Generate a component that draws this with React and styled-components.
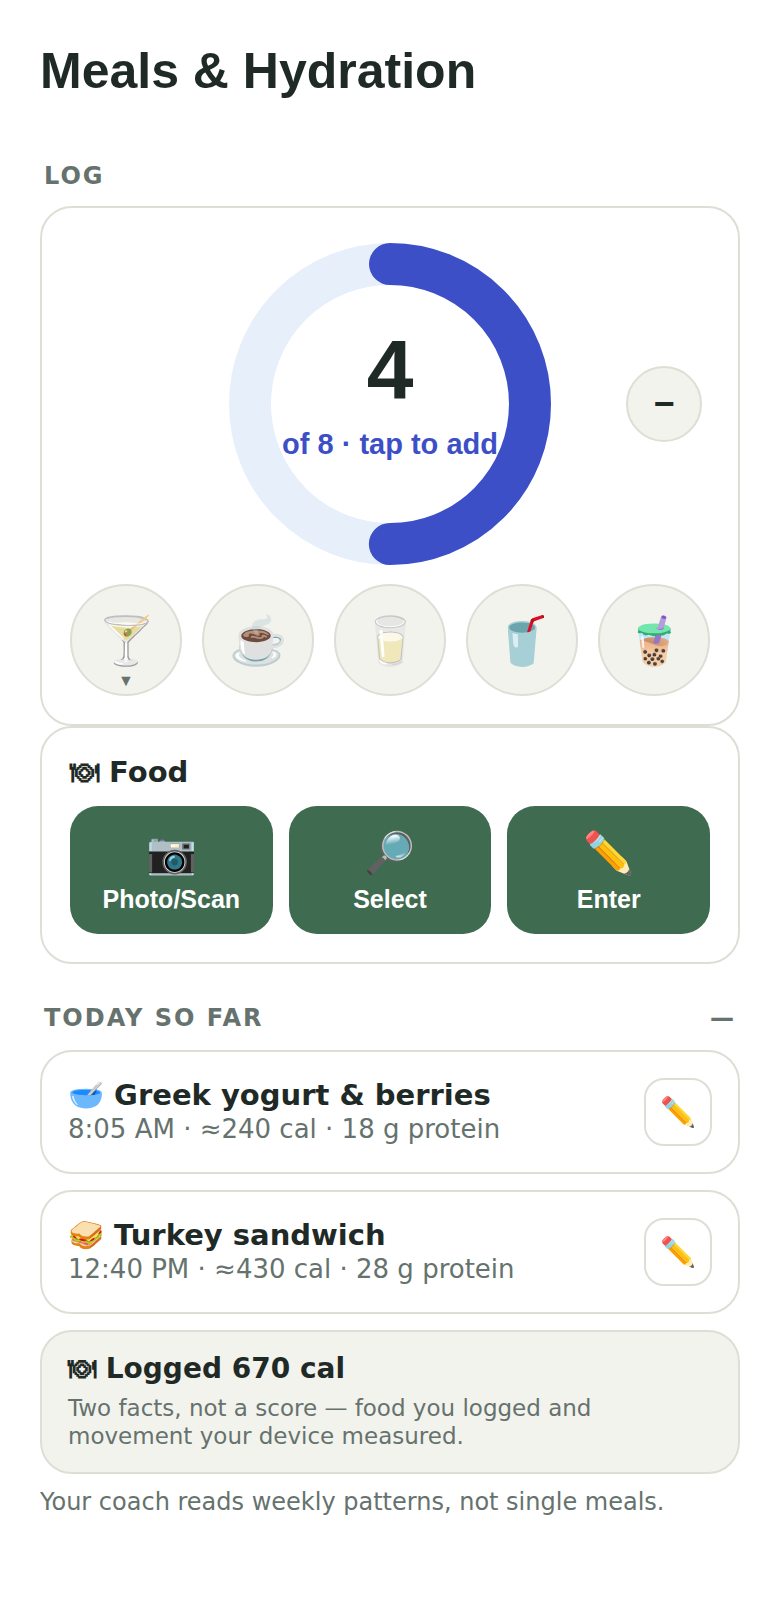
import React from 'react'
import styled, { createGlobalStyle } from 'styled-components'

const drinks = [
    { icon: '🍸', label: 'Cocktail', more: true },
    { icon: '☕', label: 'Coffee' },
    { icon: '🥛', label: 'Milk' },
    { icon: '🥤', label: 'Soft drink' },
    { icon: '🧋', label: 'Bubble tea' },
]

const foodActions = [
    { icon: '📷', label: 'Photo/Scan' },
    { icon: '🔎', label: 'Select' },
    { icon: '✏️', label: 'Enter' },
]

const meals = [
    { icon: '🥣', name: 'Greek yogurt & berries', detail: '8:05 AM · ≈240 cal · 18 g protein' },
    { icon: '🥪', name: 'Turkey sandwich', detail: '12:40 PM · ≈430 cal · 28 g protein' },
]

const RADIUS = 140
const LENGTH = 2 * Math.PI * RADIUS

const HydrationRing = ({ count, goal }) => {
    return (
        <RingButton type="button">
            <Ring viewBox="0 0 322 322" aria-hidden="true">
                <circle cx="161" cy="161" r={RADIUS} stroke="#e7effb" />
                <circle
                    cx="161"
                    cy="161"
                    r={RADIUS}
                    stroke="#3d4fc7"
                    strokeLinecap="round"
                    strokeDasharray={`${LENGTH * count / goal} ${LENGTH}`}
                    transform="rotate(-90 161 161)"
                />
            </Ring>
            <RingText>
                <Count>{count}</Count>
                <Goal>of {goal} · tap to add</Goal>
            </RingText>
        </RingButton>
    )
}

const MealCard = ({ meal }) => {
    return (
        <MealContainer>
            <div>
                <MealName>{meal.icon} {meal.name}</MealName>
                <MealDetail>{meal.detail}</MealDetail>
            </div>
            <EditButton type="button" aria-label={`Edit ${meal.name}`}>✏️</EditButton>
        </MealContainer>
    )
}

const App = () => {
    return (
        <>
            <GlobalStyle />
            <Page>
                <Title>Meals &amp; Hydration</Title>
                <SectionHeader $first>
                    <SectionTitle>LOG</SectionTitle>
                </SectionHeader>
                <Card>
                    <RingRow>
                        <HydrationRing count={4} goal={8} />
                        <MinusButton type="button" aria-label="Remove one">−</MinusButton>
                    </RingRow>
                    <DrinkRow>
                        {drinks.map((drink) => (
                            <DrinkButton type="button" key={drink.label} aria-label={drink.label}>
                                {drink.icon}
                                {drink.more && <Caret>▼</Caret>}
                            </DrinkButton>
                        ))}
                    </DrinkRow>
                </Card>
                <Card>
                    <FoodTitle>🍽 Food</FoodTitle>
                    <FoodActions>
                        {foodActions.map((action) => (
                            <FoodButton type="button" key={action.label}>
                                <FoodIcon>{action.icon}</FoodIcon>
                                {action.label}
                            </FoodButton>
                        ))}
                    </FoodActions>
                </Card>
                <SectionHeader>
                    <SectionTitle>TODAY SO FAR</SectionTitle>
                    <SectionTitle as="span">—</SectionTitle>
                </SectionHeader>
                <MealList>
                    {meals.map((meal) => (
                        <MealCard meal={meal} key={meal.name} />
                    ))}
                    <Summary>
                        <SummaryTitle>🍽 Logged 670 cal</SummaryTitle>
                        <SummaryText>Two facts, not a score — food you logged and movement your device measured.</SummaryText>
                    </Summary>
                </MealList>
                <Footnote>Your coach reads weekly patterns, not single meals.</Footnote>
            </Page>
        </>
    )
}

export default App

const GlobalStyle = createGlobalStyle`
    * {
        box-sizing:border-box;
    }
    body {
        margin:0;
        background-color:#fff;
        color:#1f2a27;
        font-family:"DejaVu Sans", sans-serif;
    }
    h1, h2, h3, p {
        margin:0;
    }
    button {
        padding:0;
        color:inherit;
        font-family:"Liberation Sans", sans-serif;
        cursor:pointer;
    }
`

const Page = styled.main`
    padding:40px 40px 100px;
`

const Title = styled.h1`
    font-family:"Liberation Sans", sans-serif;
    font-size:50px;
    line-height:62px;
`

const SectionHeader = styled.header`
    display:flex;
    justify-content:space-between;
    padding:${(props) => (props.$first ? '58px 4px 14px' : '38px 4px 16px')};
`

const SectionTitle = styled.h2`
    color:#65726d;
    font-size:24px;
    line-height:32px;
    font-weight:bold;
    letter-spacing:2px;
`

const Card = styled.section`
    padding:28px;
    border:2px solid #deded6;
    border-radius:32px;
    background-color:#fff;
`

const RingRow = styled.div`
    display:grid;
    grid-template-columns:1fr auto 1fr;
    align-items:center;
    padding:7px 8px 19px;
`

const RingButton = styled.button`
    grid-column:2;
    position:relative;
    width:322px;
    height:322px;
    border:0;
    border-radius:50%;
    background:none;
`

const Ring = styled.svg`
    display:block;
    width:100%;
    height:100%;
    fill:none;
    stroke-width:42px;
`

const RingText = styled.span`
    position:absolute;
    inset:0;
    display:flex;
    flex-direction:column;
    align-items:center;
    justify-content:center;
    padding-bottom:8px;
    font-weight:bold;
    white-space:nowrap;
`

const Count = styled.span`
    font-size:84px;
    line-height:88px;
`

const Goal = styled.span`
    color:#3d4fc7;
    font-size:29px;
    line-height:60px;
`

const MinusButton = styled.button`
    justify-self:end;
    width:76px;
    height:76px;
    border:2px solid #deded6;
    border-radius:50%;
    background-color:#f3f3ed;
    font-size:36px;
    font-weight:bold;
`

const DrinkRow = styled.div`
    display:flex;
    justify-content:space-between;
`

const DrinkButton = styled.button`
    position:relative;
    width:112px;
    height:112px;
    border:2px solid #deded6;
    border-radius:50%;
    background-color:#f3f3ed;
    font-size:47px;
`

const Caret = styled.span`
    position:absolute;
    left:0;
    right:0;
    bottom:5px;
    color:#65726d;
    font-size:16px;
    line-height:16px;
`

const FoodTitle = styled.h2`
    font-family:"DejaVu Sans", "Unifont Upper", sans-serif;
    font-size:29px;
    line-height:32px;
`

const FoodActions = styled.div`
    display:grid;
    grid-template-columns:repeat(3, 1fr);
    gap:16px;
    margin-top:18px;
`

const FoodButton = styled.button`
    display:flex;
    flex-direction:column;
    align-items:center;
    justify-content:center;
    height:128px;
    border:0;
    border-radius:28px;
    background-color:#3f6b50;
    color:#fff;
    font-size:25px;
    font-weight:bold;
    line-height:30px;
`

const FoodIcon = styled.span`
    margin-bottom:4px;
    font-size:41px;
    line-height:54px;
`

const MealList = styled.div`
    display:flex;
    flex-direction:column;
    gap:16px;
`

const MealContainer = styled.article`
    display:flex;
    justify-content:space-between;
    align-items:center;
    padding:26px;
    border:2px solid #deded6;
    border-radius:32px;
`

const MealName = styled.h3`
    font-size:29px;
    line-height:34px;
`

const MealDetail = styled.p`
    color:#65726d;
    font-size:26px;
    line-height:34px;
`

const EditButton = styled.button`
    width:68px;
    height:68px;
    border:2px solid #deded6;
    border-radius:20px;
    background-color:#fff;
    font-size:29px;
    line-height:32px;
`

const Summary = styled.section`
    padding:20px 26px 22px;
    border:2px solid #deded6;
    border-radius:32px;
    background-color:#f3f3ed;
`

const SummaryTitle = styled.h3`
    font-family:"DejaVu Sans", "Unifont Upper", sans-serif;
    font-size:28px;
    line-height:34px;
`

const SummaryText = styled.p`
    margin-top:8px;
    max-width:580px;
    color:#65726d;
    font-size:23px;
    line-height:28px;
`

const Footnote = styled.p`
    margin-top:14px;
    color:#65726d;
    font-size:24px;
    line-height:28px;
`
